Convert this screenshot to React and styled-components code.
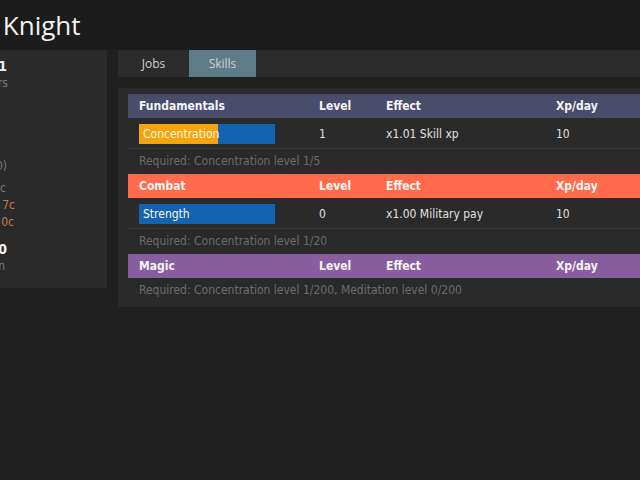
import React from 'react';
import styled, { createGlobalStyle } from 'styled-components';

const GlobalStyle = createGlobalStyle`
  html, body {
    margin: 0;
    background: #202020;
    overflow: hidden;
    width: 640px;
    height: 480px;
  }
`;

const Page = styled.div`
  margin-left: -150px;
  width: 900px;
  font-family: 'DejaVu Sans Condensed', 'DejaVu Sans', sans-serif;
  color: #e6e6e6;
`;

const Title = styled.h1`
  margin: 0;
  height: 50px;
  padding-left: 40px;
  font-family: 'Open Sans', 'Noto Sans', sans-serif;
  font-weight: 400;
  font-size: 26px;
  line-height: 50px;
  color: #f2f2f2;
  background: #1c1c1c;
`;

const Body = styled.div`
  display: flex;
  align-items: flex-start;
  gap: 11px;
`;

const Sidebar = styled.div`
  width: 257px;
  height: 238px;
  background: #2a2a2a;
  padding-top: 8px;
  box-sizing: border-box;
`;

const StatColumn = styled.div`
  width: 174px;
  text-align: right;
`;

const Stat = styled.div`
  font-size: ${(p) => (p.$big ? '14px' : '12px')};
  font-weight: ${(p) => (p.$big ? 700 : 400)};
  line-height: 17px;
  color: ${(p) => p.$color || '#7a7a7a'};
  padding-right: ${(p) => p.$pad || 0}px;
  margin-top: ${(p) => p.$gap || 0}px;
  white-space: nowrap;
`;

const Main = styled.div`
  display: flex;
  flex-direction: column;
  gap: 11px;
  width: 600px;
`;

const TabBar = styled.div`
  display: flex;
  height: 27px;
  background: #2b2b2b;
`;

const Tab = styled.div`
  width: ${(p) => p.$w}px;
  display: flex;
  align-items: center;
  justify-content: center;
  font-family: 'Open Sans', 'Noto Sans', sans-serif;
  font-size: 12px;
  color: #d0d0d0;
  background: ${(p) => (p.$active ? '#5d7c87' : 'transparent')};
`;

const Panel = styled.div`
  background: #2a2a2a;
  padding: 6px 10px 4px;
`;

const Table = styled.div`
  display: flex;
  flex-direction: column;
  font-size: 12px;
`;

const Row = styled.div`
  display: grid;
  grid-template-columns: 180px 67px 170px 1fr;
  align-items: center;
  padding-left: 11px;
`;

const HeaderRow = styled(Row)`
  height: 24px;
  background: ${(p) => p.$color};
  font-weight: 700;
  color: #f4f4f4;
`;

const SkillRow = styled(Row)`
  padding-top: 1px;
  box-sizing: border-box;
  height: 31px;
  border-bottom: 1px solid #383838;
  color: #e0e0e0;
`;

const Bar = styled.div`
  position: relative;
  width: 136px;
  height: 20px;
  background: #1363b3;
`;

const BarFill = styled.div`
  position: absolute;
  left: 0;
  top: 0;
  bottom: 0;
  background: #f4a40c;
`;

const BarLabel = styled.span`
  position: relative;
  display: block;
  padding-left: 4px;
  line-height: 20px;
  color: #fff6e0;
`;

const Required = styled.div`
  height: 25px;
  line-height: 25px;
  padding-left: 11px;
  color: #6c6c6c;
`;

const groups = [
  {
    name: 'Fundamentals',
    color: '#4a4c6c',
    skills: [{ name: 'Concentration', level: 1, effect: 'x1.01 Skill xp', xp: 10, progress: 58 }],
    required: 'Required: Concentration level 1/5',
  },
  {
    name: 'Combat',
    color: '#ff6b4b',
    skills: [{ name: 'Strength', level: 0, effect: 'x1.00 Military pay', xp: 10, progress: 0 }],
    required: 'Required: Concentration level 1/20',
  },
  {
    name: 'Magic',
    color: '#895e9f',
    skills: [],
    required: 'Required: Concentration level 1/200, Meditation level 0/200',
  },
];

export default function App() {
  return (
    <Page>
      <GlobalStyle />
      <Title>Progress Knight</Title>
      <Body>
        <Sidebar>
          <StatColumn>
            <Stat $big $color="#f2f2f2" $pad={17}>Day 1</Stat>
            <Stat $pad={16}>14 years</Stat>
            <Stat $gap={66} $pad={17}>Speed (x1.00)</Stat>
            <Stat $gap={5} $pad={18} $color="#8a7566">Net/day: +7c</Stat>
            <Stat $pad={9} $color="#c8764a">Income/day: 7c</Stat>
            <Stat $pad={10} $color="#c8764a">Expense/day: 0c</Stat>
            <Stat $big $gap={10} $pad={17} $color="#f2f2f2">Evil 0</Stat>
            <Stat $pad={19}>Auto-learn</Stat>
          </StatColumn>
        </Sidebar>
        <Main>
          <TabBar>
            <Tab $w={71}>Jobs</Tab>
            <Tab $w={67} $active>Skills</Tab>
          </TabBar>
          <Panel>
            <Table>
              {groups.map((g) => (
                <React.Fragment key={g.name}>
                  <HeaderRow $color={g.color}>
                    <span>{g.name}</span>
                    <span>Level</span>
                    <span>Effect</span>
                    <span>Xp/day</span>
                  </HeaderRow>
                  {g.skills.map((s) => (
                    <SkillRow key={s.name}>
                      <Bar>
                        <BarFill style={{ width: `${s.progress}%` }} />
                        <BarLabel>{s.name}</BarLabel>
                      </Bar>
                      <span>{s.level}</span>
                      <span>{s.effect}</span>
                      <span>{s.xp}</span>
                    </SkillRow>
                  ))}
                  <Required>{g.required}</Required>
                </React.Fragment>
              ))}
            </Table>
          </Panel>
        </Main>
      </Body>
    </Page>
  );
}
